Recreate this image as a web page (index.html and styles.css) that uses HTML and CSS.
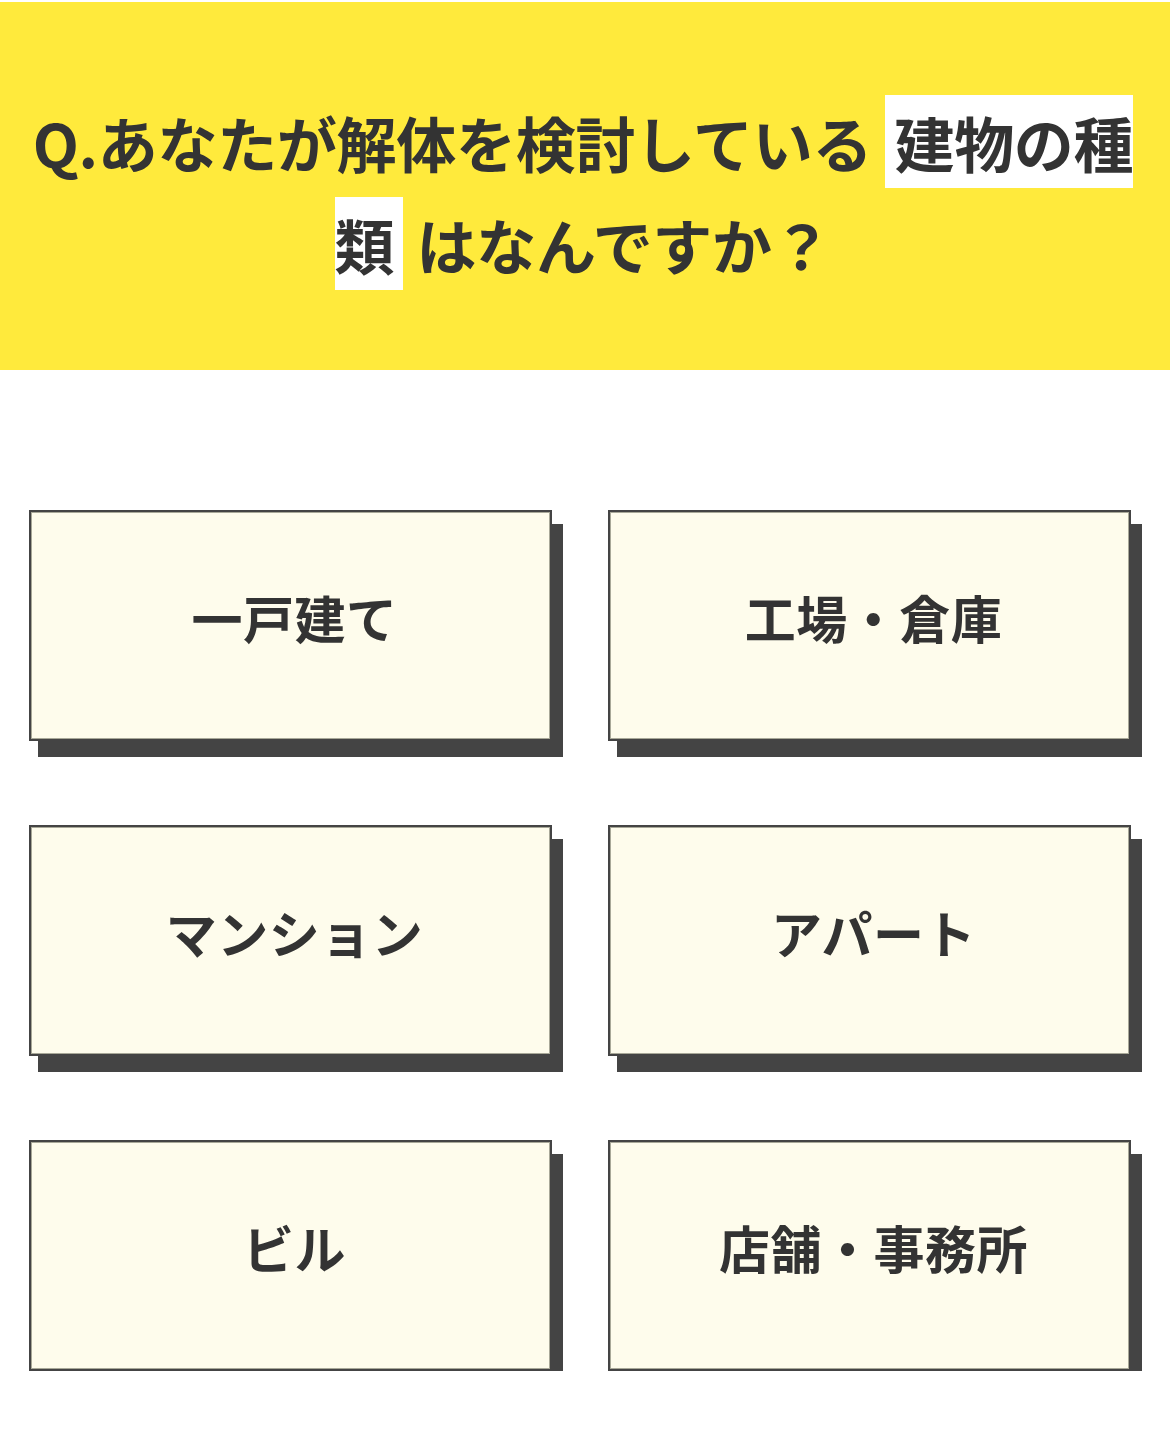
FILE: index.html
```html
<!DOCTYPE html>
<html lang="ja">
<head>
	<meta charset="UTF-8">
	<title>建物の種類</title>
	<link rel="stylesheet" href="styles.css">
</head>
<body>
	<!-- question -->
	<div class="question">
		<h1 class="question-title">Q.あなたが解体を検討している <span class="mark">建物の種類</span> はなんですか？</h1>
	</div>

	<!-- choices -->
	<div class="choices">
		<button class="choice">一戸建て</button>
		<button class="choice">工場・倉庫</button>
		<button class="choice">マンション</button>
		<button class="choice">アパート</button>
		<button class="choice">ビル</button>
		<button class="choice">店舗・事務所</button>
	</div>
</body>
</html>
```

FILE: styles.css
```css
html,
body {
	padding: 0;
	margin: 0;
	background: #fff;
	font-family: "Noto Sans CJK JP", "Noto Sans", sans-serif;
	color: #333;
}

* {
	box-sizing: border-box;
}

/* 質問部分 */
.question {
	margin-top: 2px;
	height: 368px;
	background: #ffea3c;
	padding: 89px 24px 0 20px;
}

.question-title {
	margin: 0;
	text-align: center;
	font-size: 60px;
	font-weight: bold;
	line-height: 102px;
	letter-spacing: -0.3px;
	color: #333;
}

.mark {
	background: #fff;
	padding: 3px 9px;
}

/* 選択肢 */
.choices {
	display: grid;
	grid-template-columns: 523px 523px;
	column-gap: 56px;
	row-gap: 84px;
	padding: 140px 0 0 29px;
}

.choice {
	display: flex;
	align-items: center;
	justify-content: center;
	height: 231px;
	background: #fefcec;
	border: 2px solid #444;
	box-shadow: inset 0 0 0 1px #a8a898, 10px 15px 0 1px #444;
	font-family: inherit;
	font-size: 51px;
	font-weight: bold;
	letter-spacing: 0.5px;
	color: #333;
	cursor: pointer;
	padding: 0 0 18px 8px;
}

.choice:focus {
	outline: none;
}
```
